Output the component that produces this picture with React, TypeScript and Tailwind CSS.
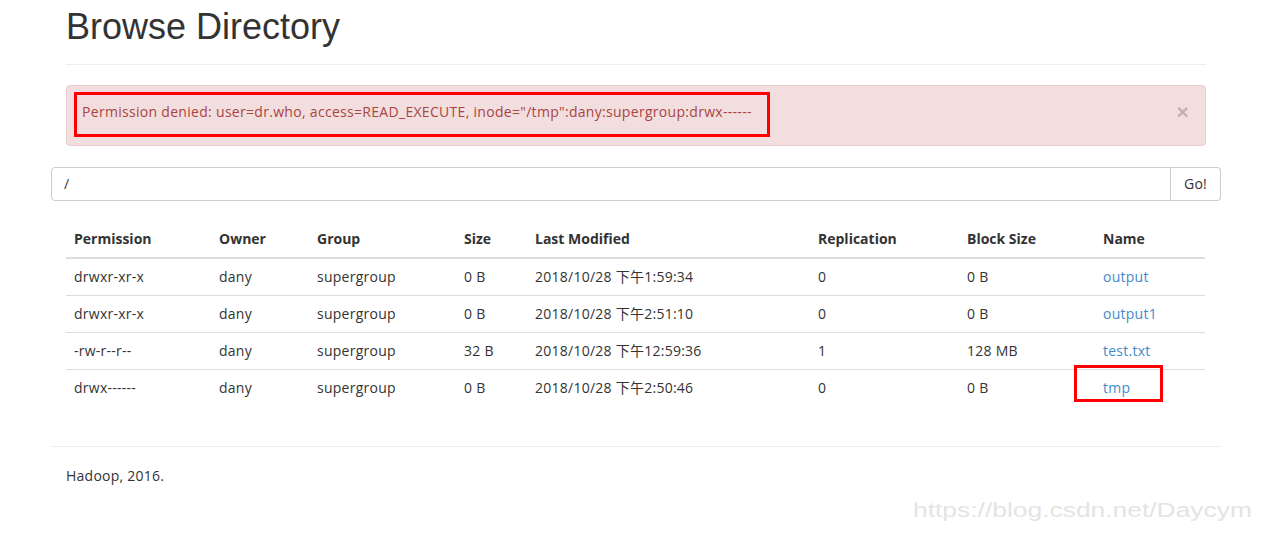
const rows = [
  { perm: "drwxr-xr-x", owner: "dany", group: "supergroup", size: "0 B", modified: "2018/10/28 下午1:59:34", replication: "0", block: "0 B", name: "output" },
  { perm: "drwxr-xr-x", owner: "dany", group: "supergroup", size: "0 B", modified: "2018/10/28 下午2:51:10", replication: "0", block: "0 B", name: "output1" },
  { perm: "-rw-r--r--", owner: "dany", group: "supergroup", size: "32 B", modified: "2018/10/28 下午12:59:36", replication: "1", block: "128 MB", name: "test.txt" },
  { perm: "drwx------", owner: "dany", group: "supergroup", size: "0 B", modified: "2018/10/28 下午2:50:46", replication: "0", block: "0 B", name: "tmp" },
];

const headers = ["Permission", "Owner", "Group", "Size", "Last Modified", "Replication", "Block Size", "Name"];
const widths = ["w-[145px]", "w-[98px]", "w-[147px]", "w-[71px]", "w-[283px]", "w-[149px]", "w-[136px]", "w-[110px]"];

export default function App() {
  return (
    <div className="relative min-h-[534px] bg-white text-[14px] leading-[20px] tracking-[0.25px] text-[#333] font-['Open_Sans','Noto_Sans_CJK_SC',sans-serif]">
      <div className="ml-[51px] w-[1170px]">
        <div className="mx-[15px] border-b border-[#eee] pt-[7px] pb-[17px] tracking-normal">
          <h1 className="font-['Liberation_Sans',Arial,sans-serif] text-[36px] leading-[39.6px] text-[#333]">
            Browse Directory
          </h1>
        </div>

        <div className="mx-[15px] mt-[20px] flex h-[61px] items-start justify-between rounded-[4px] border border-[#ebccd1] bg-[#f2dede] pl-[7px] pr-[16px] pt-[6px]">
          <div className="relative h-[45px] w-[696px] border-[3px] border-[#ff0000] pl-[5px] pt-[7px] tracking-[0.3px] text-[#a94442]">
            Permission denied: user=dr.who, access=READ_EXECUTE, inode="/tmp":dany:supergroup:drwx------
          </div>
          <span className="mt-[10px] font-['Liberation_Sans',Arial,sans-serif] text-[21px] font-bold leading-[20px] text-black opacity-20">
            ×
          </span>
        </div>

        <div className="mt-[21px] flex h-[34px]">
          <div className="flex flex-1 items-center rounded-l-[4px] border border-[#ccc] px-[12px] pt-[1px]">/</div>
          <button className="w-[50px] rounded-r-[4px] border border-l-0 border-[#ccc] bg-white pt-[1px] text-center">Go!</button>
        </div>

        <table className="mx-[15px] mt-[20px] w-[1139px] border-collapse text-left">
          <thead>
            <tr className="border-b-2 border-[#ddd]">
              {headers.map((h, i) => (
                <th key={h} className={`${widths[i]} p-[8px] font-bold tracking-normal`}>
                  {h}
                </th>
              ))}
            </tr>
          </thead>
          <tbody>
            {rows.map((r, idx) => (
              <tr key={r.name} className={idx === 0 ? "" : "border-t border-[#ddd]"}>
                <td className="p-[8px]">{r.perm}</td>
                <td className="p-[8px]">{r.owner}</td>
                <td className="p-[8px]">{r.group}</td>
                <td className="p-[8px]">{r.size}</td>
                <td className="p-[8px]">{r.modified}</td>
                <td className="p-[8px]">{r.replication}</td>
                <td className="p-[8px]">{r.block}</td>
                <td className="relative p-[8px]">
                  <a className="text-[#428bca]">{r.name}</a>
                  {r.name === "tmp" && (
                    <span className="absolute left-[-21px] top-[-5px] h-[37px] w-[89px] border-[3px] border-[#ff0000]" />
                  )}
                </td>
              </tr>
            ))}
          </tbody>
        </table>

        <hr className="mt-[40px] border-t border-[#eee]" />
        <p className="mx-[15px] mt-[19px]">Hadoop, 2016.</p>
      </div>

      <span className="absolute left-[913px] top-[498px] origin-left scale-x-[1.32] font-['Liberation_Sans',Arial,sans-serif] text-[20px] leading-[24px] tracking-normal text-[#e4e4e4]">
        https://blog.csdn.net/Daycym
      </span>
    </div>
  );
}
